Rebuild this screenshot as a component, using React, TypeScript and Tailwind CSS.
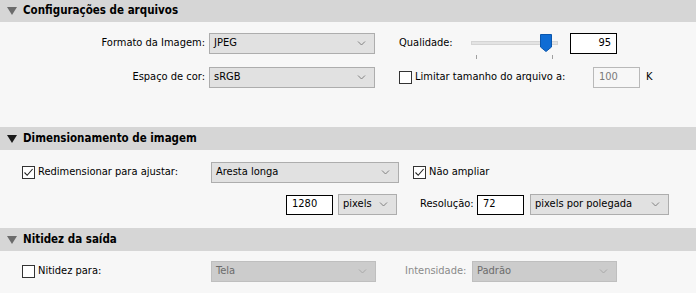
import React from 'react';

const FONT = "font-['DejaVu_Sans','Liberation_Sans',sans-serif] [font-stretch:condensed]";

function Chevron({ muted = false }: { muted?: boolean }) {
  return (
    <svg width="9" height="5" viewBox="0 0 9 5" className="shrink-0">
      <path
        d="M1 0.5 L4.5 4 L8 0.5"
        fill="none"
        stroke={muted ? '#a8a8a8' : '#808080'}
        strokeWidth="1"
      />
    </svg>
  );
}

function Select({
  value,
  width,
  disabled = false,
}: {
  value: string;
  width: string;
  disabled?: boolean;
}) {
  return (
    <div
      className={`${width} flex h-[21px] shrink-0 items-center justify-between border pl-[4px] pr-[8px] ${
        disabled
          ? 'border-[#bfbfbf] bg-[#cccccc] text-[#6b6b6b]'
          : 'border-[#adadad] bg-[#e1e1e1] text-black'
      }`}
    >
      <span>{value}</span>
      <Chevron muted={disabled} />
    </div>
  );
}

function Checkbox({ checked = false, label }: { checked?: boolean; label: string }) {
  return (
    <div className="flex items-center">
      <span className="flex h-[13px] w-[13px] items-center justify-center border border-[#333333] bg-white">
        {checked && (
          <svg width="11" height="11" viewBox="0 0 11 11">
            <path d="M1.5 5.5 L4.2 8.3 L9.6 2" fill="none" stroke="#222" strokeWidth="1.1" />
          </svg>
        )}
      </span>
      <span className="ml-[3px]">{label}</span>
    </div>
  );
}

function SectionHeader({ title, dark = false, tall = true }: { title: string; dark?: boolean; tall?: boolean }) {
  return (
    <div className={`flex ${tall ? 'h-[23px]' : 'h-[22px]'} items-center bg-[#d6d6d6] pl-[7px]`}>
      <svg width="10" height="8" viewBox="0 0 10 8">
        <path d="M0 0 H10 L5 8 Z" fill={dark ? '#1a1a1a' : '#6b6b6b'} />
      </svg>
      <span className="ml-[6px] text-[11.5px] font-bold text-black">{title}</span>
    </div>
  );
}

function Slider() {
  return (
    <div className="relative h-[20px] w-[87px] shrink-0">
      <div className="absolute left-0 right-0 top-[7px] h-[4px] border border-[#d4d4d4] bg-[#e3e3e3]" />
      <svg className="absolute left-[69px] top-0" width="12" height="18" viewBox="0 0 12 18">
        <path d="M0.5 0.5 H11.5 V13 L6 17.5 L0.5 13 Z" fill="#0f6cd4" stroke="#0a56ad" />
      </svg>
      <div className="absolute left-[5px] top-[21px] h-[4px] w-px bg-[#a0a0a0]" />
      <div className="absolute left-[81px] top-[21px] h-[4px] w-px bg-[#a0a0a0]" />
    </div>
  );
}

export default function App() {
  return (
    <div className={`h-[293px] w-[696px] overflow-hidden bg-[#f7f7f7] text-[11px] text-black ${FONT}`}>
      <SectionHeader title="Configurações de arquivos" tall={false} />
      <div className="h-[105px] pt-[11px]">
        <div className="flex h-[21px] items-center">
          <span className="w-[205px] shrink-0 text-right">Formato da Imagem:</span>
          <div className="ml-[4px]">
            <Select value="JPEG" width="w-[166px]" />
          </div>
          <span className="ml-[24px] w-[72px] shrink-0">Qualidade:</span>
          <Slider />
          <div className="ml-[12px] flex h-[21px] w-[47px] items-center justify-end border border-black bg-white pr-[5px]">
            95
          </div>
        </div>
        <div className="mt-[13px] flex h-[21px] items-center">
          <span className="w-[205px] shrink-0 text-right">Espaço de cor:</span>
          <div className="ml-[4px]">
            <Select value="sRGB" width="w-[166px]" />
          </div>
          <div className="ml-[24px] w-[194px] shrink-0">
            <Checkbox label="Limitar tamanho do arquivo a:" />
          </div>
          <div className="flex h-[21px] w-[47px] items-center border border-[#b9b9b9] pl-[5px] text-[#7a7a7a]">
            100
          </div>
          <span className="ml-[6px]">K</span>
        </div>
      </div>

      <SectionHeader title="Dimensionamento de imagem" dark />
      <div className="h-[78px] pt-[12px]">
        <div className="flex h-[21px] items-center">
          <div className="w-[211px] shrink-0 pl-[22px]">
            <Checkbox checked label="Redimensionar para ajustar:" />
          </div>
          <Select value="Aresta longa" width="w-[188px]" />
          <div className="ml-[14px]">
            <Checkbox checked label="Não ampliar" />
          </div>
        </div>
        <div className="mt-[11px] flex h-[21px] items-center pl-[286px]">
          <div className="flex h-[20px] w-[47px] items-center border border-black bg-white pl-[5px]">1280</div>
          <div className="ml-[5px]">
            <Select value="pixels" width="w-[59px]" />
          </div>
          <span className="ml-[23px] w-[57px] shrink-0">Resolução:</span>
          <div className="flex h-[20px] w-[47px] items-center border border-black bg-white pl-[5px]">72</div>
          <div className="ml-[6px]">
            <Select value="pixels por polegada" width="w-[139px]" />
          </div>
        </div>
      </div>

      <SectionHeader title="Nitidez da saída" />
      <div className="pt-[10px]">
        <div className="flex h-[21px] items-center">
          <div className="w-[211px] shrink-0 pl-[22px]">
            <Checkbox label="Nitidez para:" />
          </div>
          <Select value="Tela" width="w-[165px]" disabled />
          <span className="ml-[29px] w-[67px] shrink-0 text-[#8a8a8a]">Intensidade:</span>
          <Select value="Padrão" width="w-[145px]" disabled />
        </div>
      </div>
    </div>
  );
}
